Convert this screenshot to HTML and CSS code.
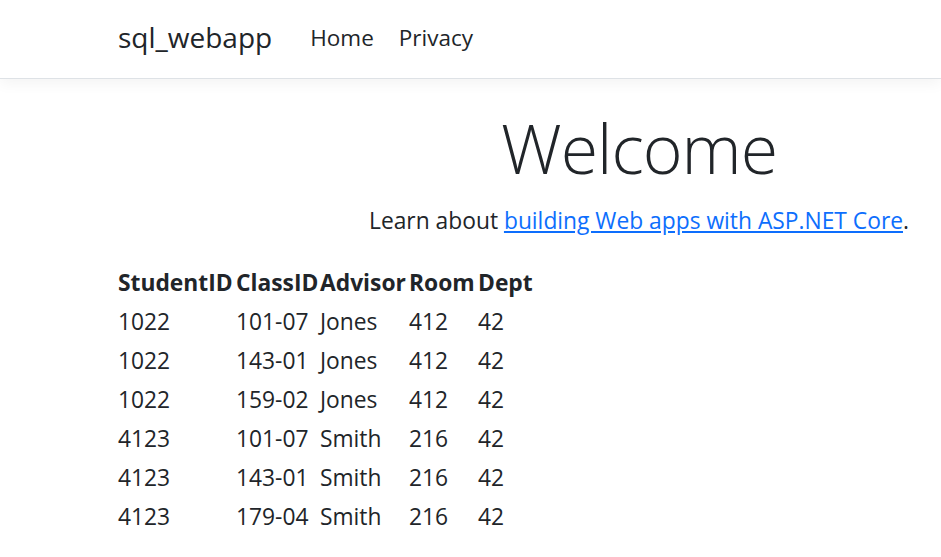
FILE: index.html
```html
<!DOCTYPE html>
<html lang="en">
<head>
<meta charset="utf-8">
<title>Home Page - sql_webapp</title>
<link rel="stylesheet" href="styles.css">
</head>
<body>
<header class="navbar">
  <div class="nav-inner">
    <a class="brand" href="#">sql_webapp</a>
    <nav class="nav-links">
      <a class="nav-link" href="#">Home</a>
      <a class="nav-link" href="#">Privacy</a>
    </nav>
  </div>
</header>
<main class="container">
  <div class="hero">
    <h1 class="display">Welcome</h1>
    <p class="lead-text">Learn about <a class="link" href="#">building Web apps with ASP.NET Core</a>.</p>
  </div>
  <table class="data">
    <thead>
      <tr>
        <th class="c1">StudentID</th>
        <th class="c2">ClassID</th>
        <th class="c3">Advisor</th>
        <th class="c4">Room</th>
        <th class="c5">Dept</th>
      </tr>
    </thead>
    <tbody>
      <tr><td>1022</td><td>101-07</td><td>Jones</td><td>412</td><td>42</td></tr>
      <tr><td>1022</td><td>143-01</td><td>Jones</td><td>412</td><td>42</td></tr>
      <tr><td>1022</td><td>159-02</td><td>Jones</td><td>412</td><td>42</td></tr>
      <tr><td>4123</td><td>101-07</td><td>Smith</td><td>216</td><td>42</td></tr>
      <tr><td>4123</td><td>143-01</td><td>Smith</td><td>216</td><td>42</td></tr>
      <tr><td>4123</td><td>179-04</td><td>Smith</td><td>216</td><td>42</td></tr>
    </tbody>
  </table>
</main>
</body>
</html>
```

FILE: styles.css
```css
html, body {
  margin: 0;
  padding: 0;
}
body {
  font-family: "Open Sans", "Noto Sans", sans-serif;
  color: #212529;
  background: #fff;
  height: 557px;
  overflow: hidden;
}
.navbar {
  height: 78px;
  border-bottom: 1px solid #dee2e6;
  box-shadow: 0 4px 14px rgba(0, 0, 0, 0.05);
  background: #fff;
}
.nav-inner {
  height: 100%;
  box-sizing: border-box;
  display: flex;
  align-items: center;
  padding: 0 0 4px 118px;
}
.brand {
  font-size: 28px;
  color: #212529;
  text-decoration: none;
  margin-right: 38px;
}
.nav-links {
  display: flex;
  gap: 25px;
}
.nav-link {
  font-size: 22.5px;
  color: #212529;
  text-decoration: none;
}
.container {
  margin-left: 118px;
}
.hero {
  text-align: center;
  padding-top: 28px;
  padding-left: 219px;
}
.display {
  font-size: 68px;
  font-weight: 300;
  letter-spacing: -1px;
  margin: 0;
  line-height: 1.2;
}
.lead-text {
  font-size: 22.8px;
  margin: 16px 0 0;
}
.link {
  color: #0d6efd;
  text-decoration: underline;
}
.data {
  border-collapse: collapse;
  margin-top: 27px;
  font-size: 22.8px;
}
.data th, .data td {
  padding: 0;
  text-align: left;
  height: 39px;
  vertical-align: middle;
}
.data th {
  font-weight: 700;
}
.c1 { width: 118px; }
.c2 { width: 84px; }
.c3 { width: 89px; }
.c4 { width: 69px; }
```
